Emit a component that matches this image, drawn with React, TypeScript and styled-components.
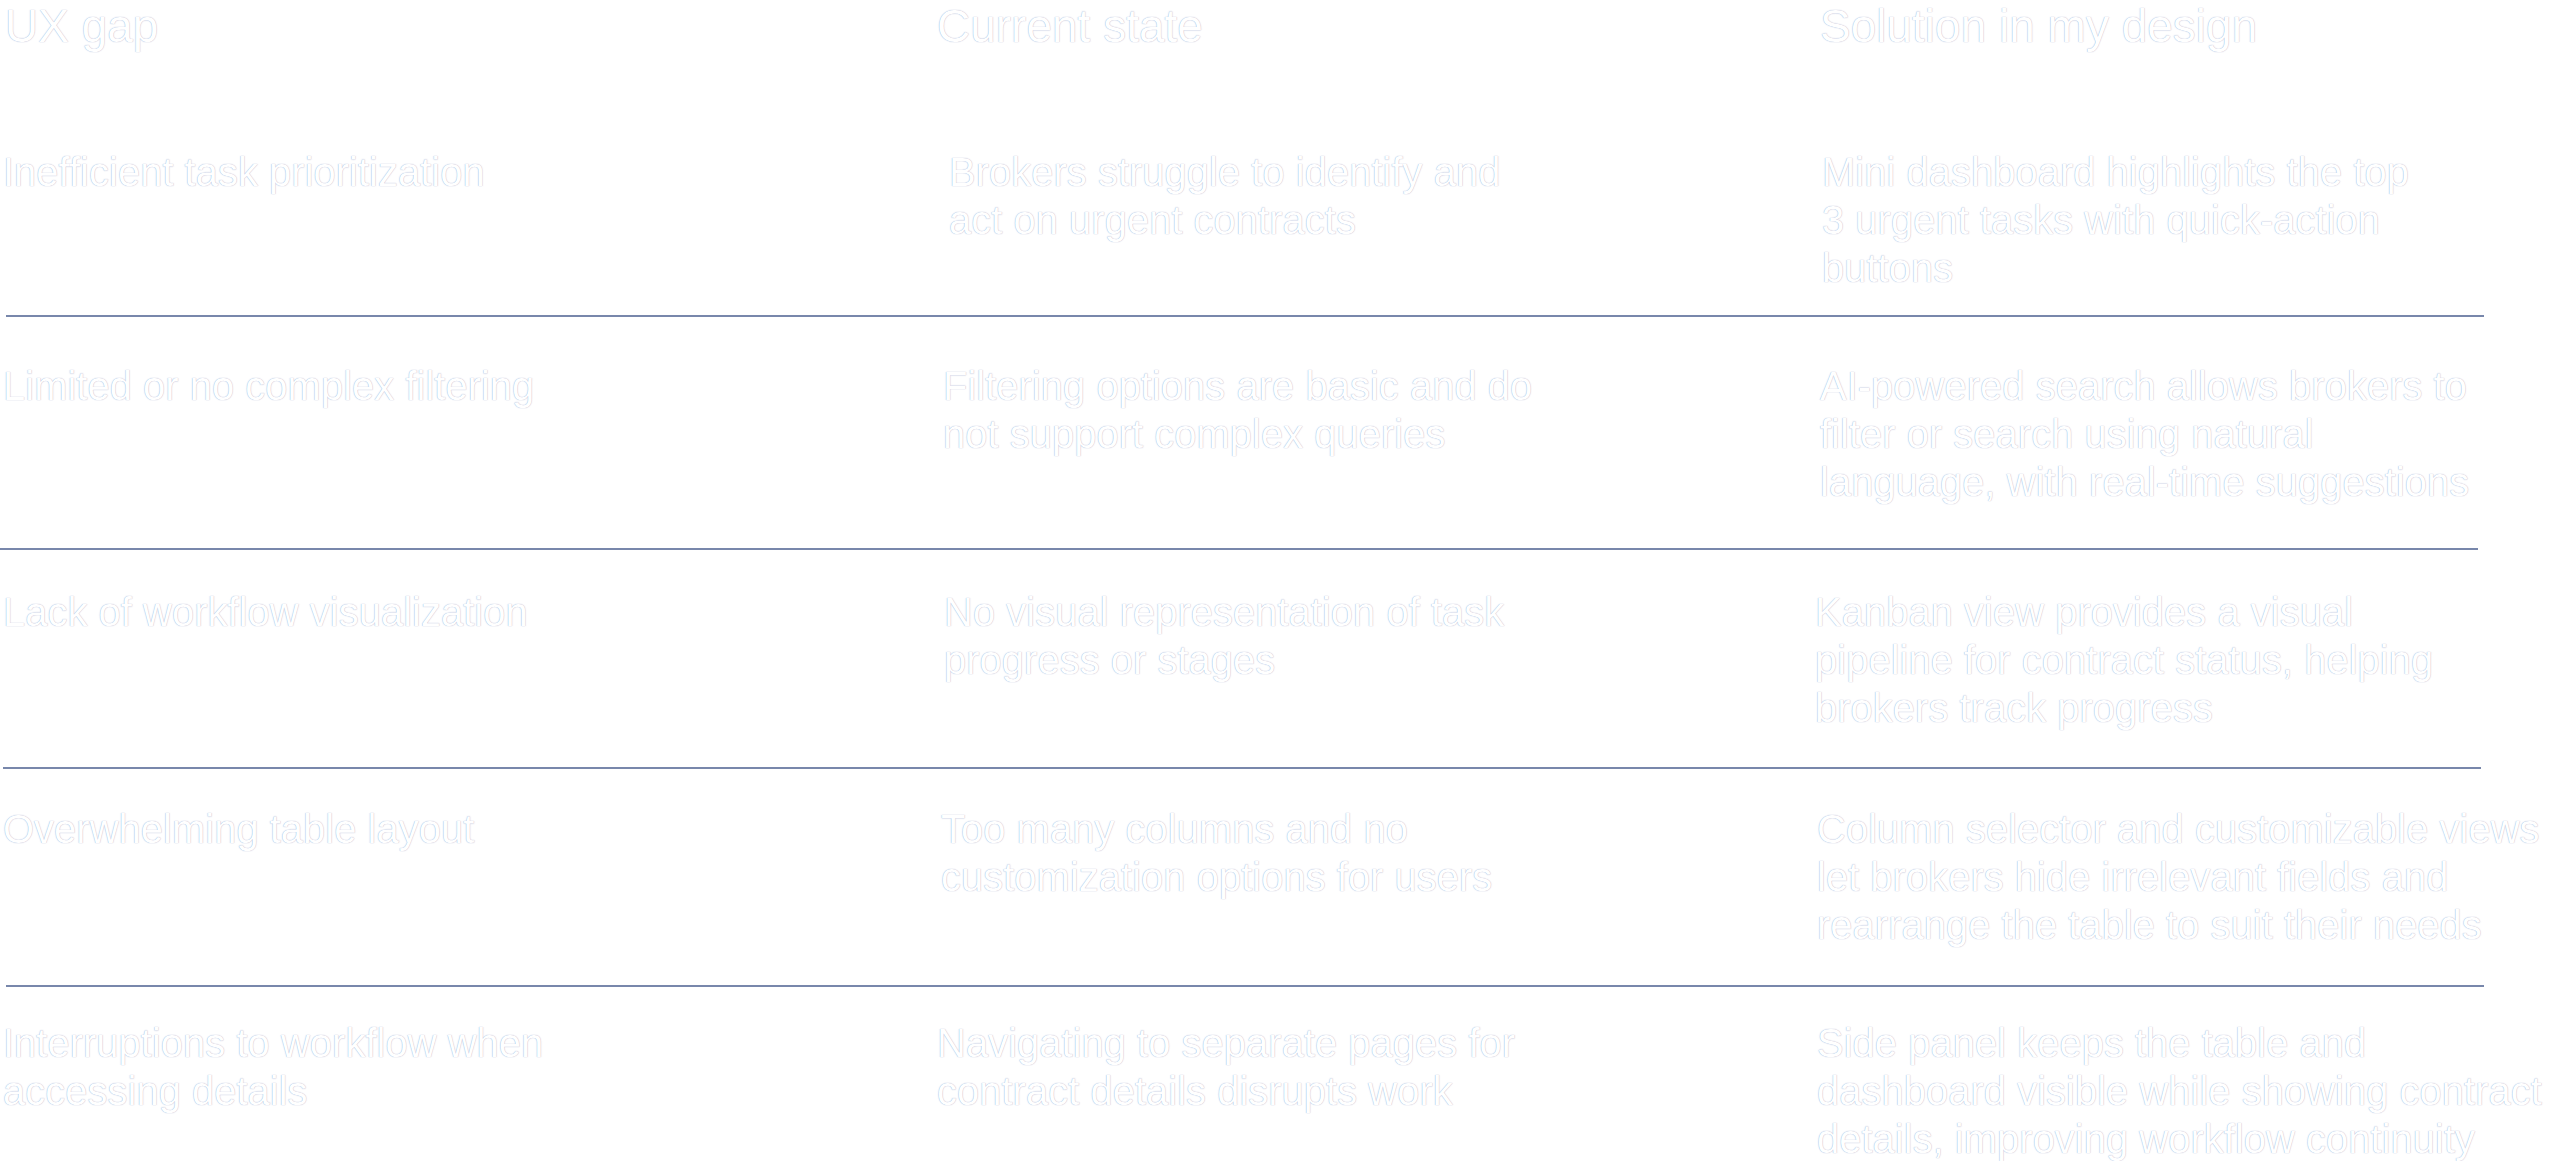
import * as React from 'react';
import styled, { createGlobalStyle } from 'styled-components';

const GlobalStyle = createGlobalStyle`
  html, body {
    margin: 0;
    padding: 0;
    background: #ffffff;
    overflow: hidden;
  }
  body {
    font-family: 'Liberation Sans', Arial, Helvetica, sans-serif;
  }
`;

const Page = styled.div`
  width: 2560px;
  height: 1161px;
  overflow: hidden;
  color: #ffffff;
  text-shadow: 0 0 1px rgba(92, 108, 170, 0.75);
`;

const HeaderRow = styled.div`
  display: grid;
  grid-template-columns: 937px 878px 1fr;
  padding-top: 3px;
  height: 46px;
`;

const HeadCell = styled.div<{ $inset: number }>`
  padding-left: ${(p) => p.$inset}px;
  font-size: 46px;
  line-height: 1;
  white-space: nowrap;
`;

const Row = styled.div<{ $padTop: number; $height: number }>`
  display: grid;
  grid-template-columns: 937px 878px 1fr;
  align-items: start;
  box-sizing: border-box;
  padding-top: ${(p) => p.$padTop}px;
  height: ${(p) => p.$height}px;
`;

const Cell = styled.div<{ $inset: number }>`
  padding-left: ${(p) => p.$inset}px;
  font-size: 40px;
  line-height: 48px;
  white-space: nowrap;
`;

const Divider = styled.div<{ $left: number; $right: number }>`
  height: 2px;
  margin-left: ${(p) => p.$left}px;
  width: ${(p) => p.$right - p.$left}px;
  background: #7887ab;
`;

type RowData = {
  padTop: number;
  height: number;
  cells: { inset: number; lines: string[] }[];
  divider?: [number, number];
};

const rows: RowData[] = [
  {
    padTop: 99,
    height: 266,
    cells: [
      { inset: 3, lines: ['Inefficient task prioritization'] },
      { inset: 12, lines: ['Brokers struggle to identify and', 'act on urgent contracts'] },
      {
        inset: 7,
        lines: ['Mini dashboard highlights the top', '3 urgent tasks with quick-action', 'buttons'],
      },
    ],
    divider: [6, 2484],
  },
  {
    padTop: 45,
    height: 231,
    cells: [
      { inset: 3, lines: ['Limited or no complex filtering'] },
      { inset: 6, lines: ['Filtering options are basic and do', 'not support complex queries'] },
      {
        inset: 5,
        lines: [
          'AI-powered search allows brokers to',
          'filter or search using natural',
          'language, with real-time suggestions',
        ],
      },
    ],
    divider: [0, 2478],
  },
  {
    padTop: 38,
    height: 217,
    cells: [
      { inset: 3, lines: ['Lack of workflow visualization'] },
      { inset: 7, lines: ['No visual representation of task', 'progress or stages'] },
      {
        inset: 0,
        lines: [
          'Kanban view provides a visual',
          'pipeline for contract status, helping',
          'brokers track progress',
        ],
      },
    ],
    divider: [3, 2481],
  },
  {
    padTop: 36,
    height: 216,
    cells: [
      { inset: 3, lines: ['Overwhelming table layout'] },
      { inset: 4, lines: ['Too many columns and no', 'customization options for users'] },
      {
        inset: 2,
        lines: [
          'Column selector and customizable views',
          'let brokers hide irrelevant fields and',
          'rearrange the table to suit their needs',
        ],
      },
    ],
    divider: [6, 2484],
  },
  {
    padTop: 32,
    height: 174,
    cells: [
      { inset: 3, lines: ['Interruptions to workflow when', 'accessing details'] },
      { inset: 0, lines: ['Navigating to separate pages for', 'contract details disrupts work'] },
      {
        inset: 2,
        lines: [
          'Side panel keeps the table and',
          'dashboard visible while showing contract',
          'details, improving workflow continuity',
        ],
      },
    ],
  },
];

export default function App() {
  return (
    <Page>
      <GlobalStyle />
      <HeaderRow>
        <HeadCell $inset={5}>UX gap</HeadCell>
        <HeadCell $inset={-3}>Current state</HeadCell>
        <HeadCell $inset={5}>Solution in my design</HeadCell>
      </HeaderRow>

      {rows.map((row, i) => (
        <React.Fragment key={i}>
          <Row $padTop={row.padTop} $height={row.height}>
            {row.cells.map((cell, j) => (
              <Cell key={j} $inset={cell.inset}>
                {cell.lines.map((line, k) => (
                  <div key={k}>{line}</div>
                ))}
              </Cell>
            ))}
          </Row>
          {row.divider && <Divider $left={row.divider[0]} $right={row.divider[1]} />}
        </React.Fragment>
      ))}
    </Page>
  );
}
